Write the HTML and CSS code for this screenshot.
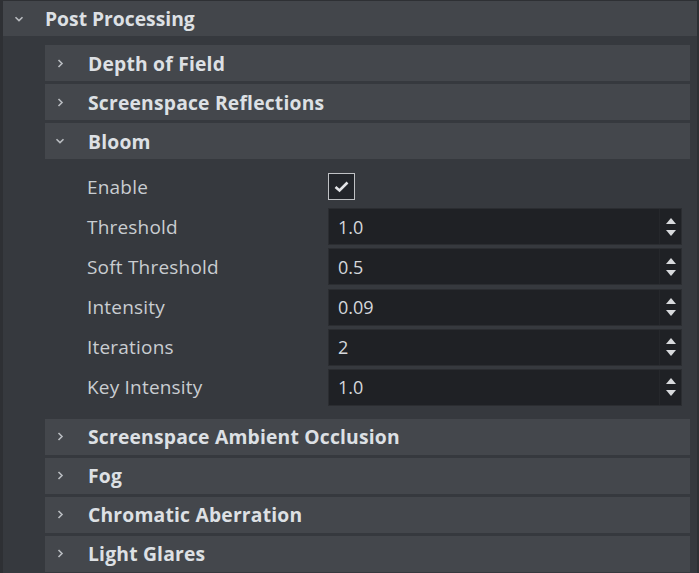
FILE: index.html
```html
<!DOCTYPE html>
<html>
<head>
<meta charset="utf-8">
<link rel="stylesheet" href="styles.css">
</head>
<body>
<div class="panel">
  <div class="main-header">
    <svg class="chev-down" width="10" height="6" viewBox="0 0 10 6"><path d="M1.5 1.2 L5 4.6 L8.5 1.2" fill="none" stroke="#b9bcc0" stroke-width="1.6"/></svg>
    <span class="main-title">Post Processing</span>
  </div>
  <div class="main-body">
    <div class="section">
      <div class="sub-header"><svg class="chev-right" width="7" height="9" viewBox="0 0 7 9"><path d="M1.5 1 L5 4.5 L1.5 8" fill="none" stroke="#b9bcc0" stroke-width="1.6"/></svg><span class="sub-title">Depth of Field</span></div>
    </div>
    <div class="section">
      <div class="sub-header"><svg class="chev-right" width="7" height="9" viewBox="0 0 7 9"><path d="M1.5 1 L5 4.5 L1.5 8" fill="none" stroke="#b9bcc0" stroke-width="1.6"/></svg><span class="sub-title">Screenspace Reflections</span></div>
    </div>
    <div class="section">
      <div class="sub-header"><svg class="chev-down-sub" width="10" height="6" viewBox="0 0 10 6"><path d="M1.5 1.2 L5 4.6 L8.5 1.2" fill="none" stroke="#b9bcc0" stroke-width="1.6"/></svg><span class="sub-title">Bloom</span></div>
      <div class="sub-body">
        <div class="prop-row">
          <span class="prop-label">Enable</span>
          <div class="checkbox"><svg width="17" height="13" viewBox="0 0 17 13"><path d="M2.5 7 L6.5 10.5 L14.5 2.5" fill="none" stroke="#e2e4e7" stroke-width="2.6"/></svg></div>
        </div>
        <div class="prop-row">
          <span class="prop-label">Threshold</span>
          <div class="spin"><span class="spin-value">1.0</span><span class="spin-arrows"><span class="tri-up"></span><span class="tri-down"></span></span></div>
        </div>
        <div class="prop-row">
          <span class="prop-label">Soft Threshold</span>
          <div class="spin"><span class="spin-value">0.5</span><span class="spin-arrows"><span class="tri-up"></span><span class="tri-down"></span></span></div>
        </div>
        <div class="prop-row">
          <span class="prop-label">Intensity</span>
          <div class="spin"><span class="spin-value">0.09</span><span class="spin-arrows"><span class="tri-up"></span><span class="tri-down"></span></span></div>
        </div>
        <div class="prop-row">
          <span class="prop-label">Iterations</span>
          <div class="spin"><span class="spin-value">2</span><span class="spin-arrows"><span class="tri-up"></span><span class="tri-down"></span></span></div>
        </div>
        <div class="prop-row">
          <span class="prop-label">Key Intensity</span>
          <div class="spin"><span class="spin-value">1.0</span><span class="spin-arrows"><span class="tri-up"></span><span class="tri-down"></span></span></div>
        </div>
      </div>
    </div>
    <div class="section">
      <div class="sub-header"><svg class="chev-right" width="7" height="9" viewBox="0 0 7 9"><path d="M1.5 1 L5 4.5 L1.5 8" fill="none" stroke="#b9bcc0" stroke-width="1.6"/></svg><span class="sub-title">Screenspace Ambient Occlusion</span></div>
    </div>
    <div class="section">
      <div class="sub-header"><svg class="chev-right" width="7" height="9" viewBox="0 0 7 9"><path d="M1.5 1 L5 4.5 L1.5 8" fill="none" stroke="#b9bcc0" stroke-width="1.6"/></svg><span class="sub-title">Fog</span></div>
    </div>
    <div class="section">
      <div class="sub-header"><svg class="chev-right" width="7" height="9" viewBox="0 0 7 9"><path d="M1.5 1 L5 4.5 L1.5 8" fill="none" stroke="#b9bcc0" stroke-width="1.6"/></svg><span class="sub-title">Chromatic Aberration</span></div>
    </div>
    <div class="section">
      <div class="sub-header"><svg class="chev-right" width="7" height="9" viewBox="0 0 7 9"><path d="M1.5 1 L5 4.5 L1.5 8" fill="none" stroke="#b9bcc0" stroke-width="1.6"/></svg><span class="sub-title">Light Glares</span></div>
    </div>
  </div>
</div>
</body>
</html>
```
FILE: styles.css
```css
html, body {
  margin: 0;
  padding: 0;
  height: 100%;
  overflow: hidden;
}
body {
  background: #2e3034;
  font-family: "Open Sans", "Noto Sans", sans-serif;
  padding: 1px 2px 0 3px;
  box-sizing: border-box;
}
.panel {
  background: #36393e;
  height: 100%;
}
.main-header {
  height: 35px;
  background: #43464b;
  display: flex;
  align-items: center;
}
.chev-down {
  margin-left: 11px;
  margin-right: 21px;
}
.main-title {
  font-weight: 700;
  font-size: 19.3px;
  color: #dde0e4;
}
.main-body {
  padding: 9px 7px 0 42px;
  display: flex;
  flex-direction: column;
  gap: 3px;
}
.sub-header {
  height: 36px;
  background: #44474c;
  display: flex;
  align-items: center;
}
.chev-right {
  margin-left: 12px;
  margin-right: 24px;
}
.chev-down-sub {
  margin-left: 10px;
  margin-right: 23px;
}
.sub-title {
  font-weight: 700;
  font-size: 19.3px;
  letter-spacing: 0.2px;
  color: #dde0e4;
}
.sub-body {
  padding: 9px 8px 10px 42px;
  display: flex;
  flex-direction: column;
  gap: 3.2px;
}
.prop-row {
  height: 37px;
  display: flex;
  align-items: center;
}
.prop-label {
  width: 241px;
  font-size: 19px;
  letter-spacing: 0.2px;
  color: #c9cdd1;
}
.checkbox {
  width: 25px;
  height: 25px;
  border: 1px solid #bfc1c4;
  background: #22252a;
  display: flex;
  align-items: center;
  justify-content: center;
}
.spin {
  flex: 1;
  height: 37px;
  box-sizing: border-box;
  background: #1f2125;
  border: 1px solid #2b2d31;
  display: flex;
  align-items: center;
}
.spin-value {
  flex: 1;
  padding-left: 9px;
  font-size: 18px;
  color: #d5d8dc;
}
.spin-arrows {
  width: 21px;
  height: 100%;
  border-left: 1px solid #25272b;
  display: flex;
  flex-direction: column;
  align-items: center;
  justify-content: center;
  gap: 6px;
}
.tri-up {
  width: 0;
  height: 0;
  border-left: 5px solid transparent;
  border-right: 5px solid transparent;
  border-bottom: 6px solid #d8dadd;
}
.tri-down {
  width: 0;
  height: 0;
  border-left: 5px solid transparent;
  border-right: 5px solid transparent;
  border-top: 6px solid #d8dadd;
}
```
